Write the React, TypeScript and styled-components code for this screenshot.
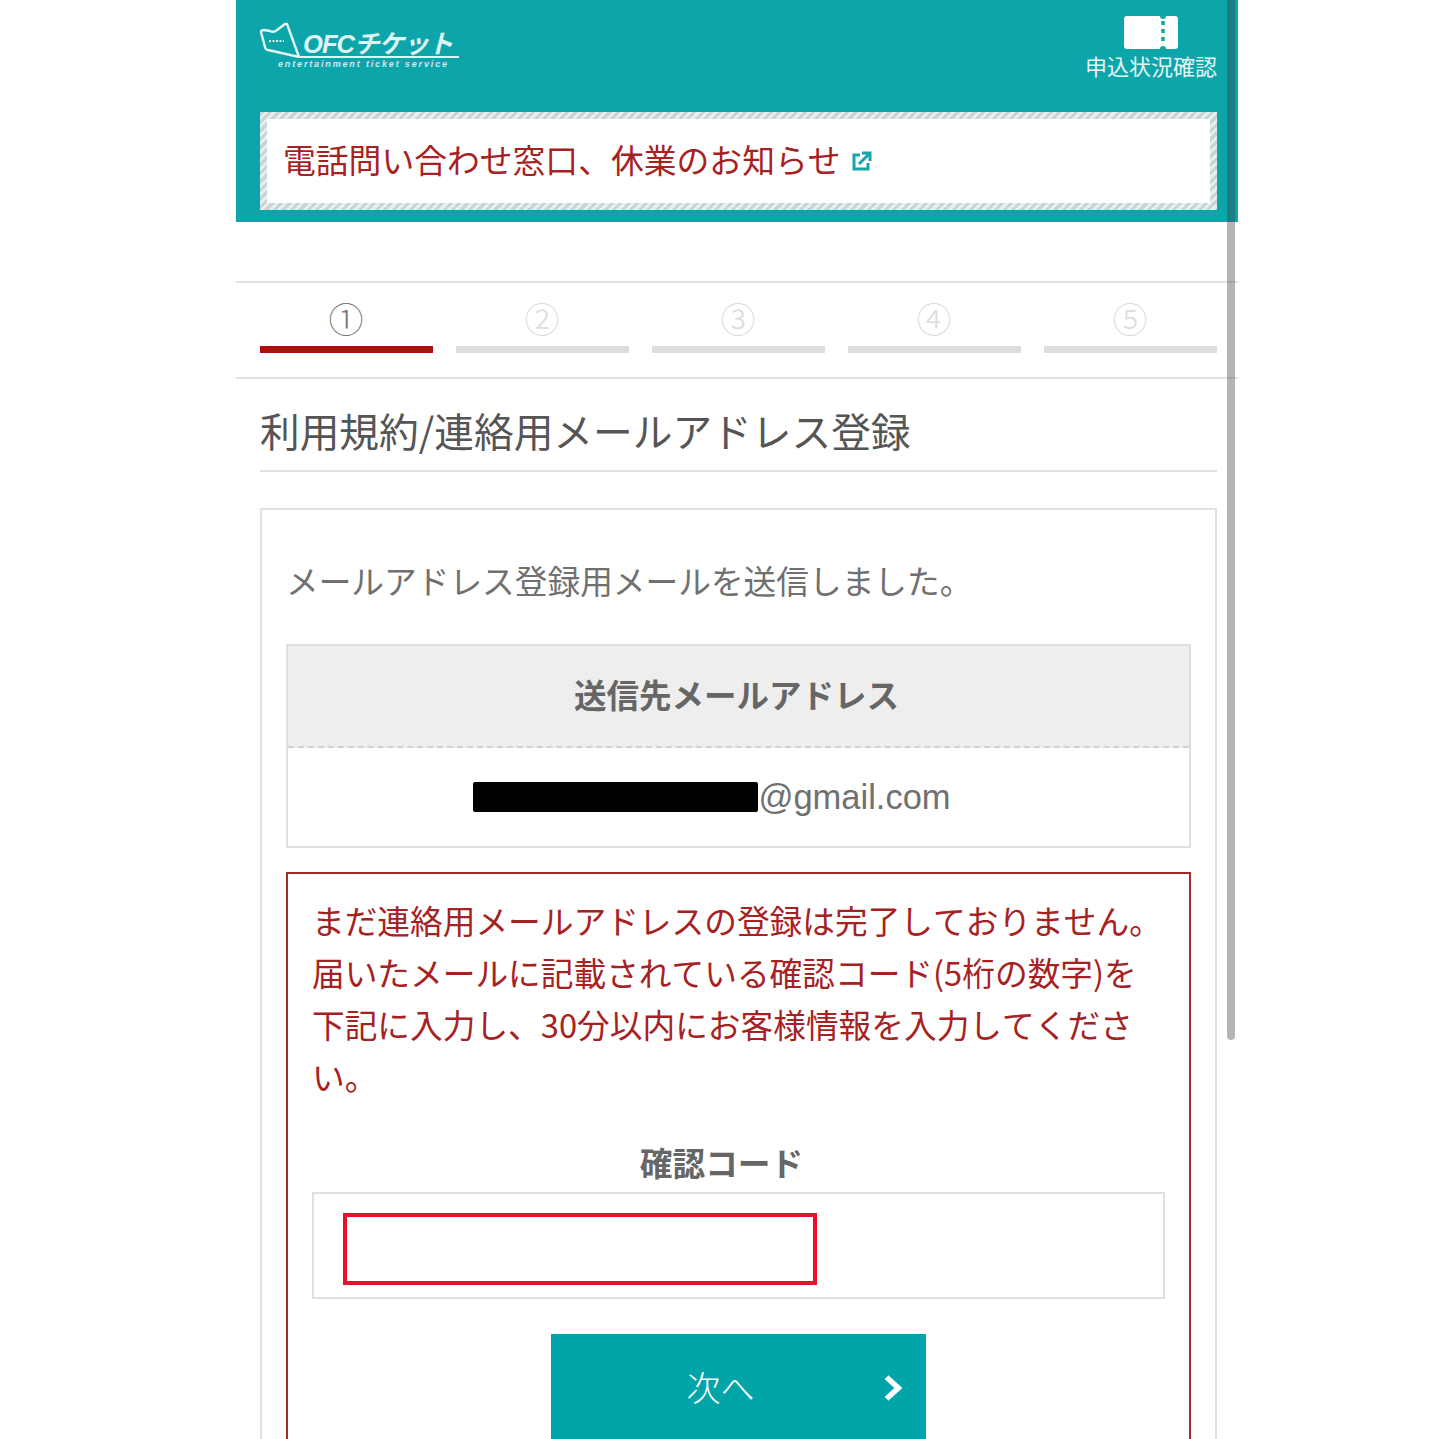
import React from 'react';
import styled, {createGlobalStyle} from 'styled-components';

const STEPS = ['①', '②', '③', '④', '⑤'];

export default function App() {
  return (
    <>
      <GlobalStyle />
      <Page>
        <Header>
          <TopRow>
            <Logo>
              <LogoMark viewBox="0 0 44 36" fill="none">
                <path
                  d="M2 10 Q2 8 5 8 L11 9 Q15 11 18 8 L26 2 L28 2 L40 35 L9 28 Q7 28 6 25 Z"
                  stroke="#e4f6f6"
                  strokeWidth="2.4"
                  strokeLinejoin="round"
                />
                <path d="M10 19 H25" stroke="#e4f6f6" strokeWidth="2" strokeDasharray="2 1.5" />
              </LogoMark>
              <LogoWords>
                <LogoName>OFCチケット</LogoName>
                <LogoTagline>entertainment ticket service</LogoTagline>
              </LogoWords>
            </Logo>
            <StatusLink>
              <svg width="54" height="33" viewBox="0 0 54 33">
                <path
                  d="M3 0 H36 A3 3 0 0 0 42 0 H51 A3 3 0 0 1 54 3 V30 A3 3 0 0 1 51 33 H42 A3 3 0 0 0 36 33 H3 A3 3 0 0 1 0 30 V3 A3 3 0 0 1 3 0 Z"
                  fill="#fff"
                />
                <path d="M39 5 V29" stroke="#0ca5aa" strokeWidth="3.5" strokeDasharray="4 4" />
              </svg>
              <StatusLabel>申込状況確認</StatusLabel>
            </StatusLink>
          </TopRow>
          <Notice>
            <NoticeText>電話問い合わせ窓口、休業のお知らせ</NoticeText>
            <svg width="20" height="20" viewBox="0 0 20 20" fill="none" stroke="#17a5aa" strokeWidth="3">
              <path d="M8 4 H2 V18 H16 V12" />
              <path d="M7 13 L17 3 M10 2 H18 V10" />
            </svg>
          </Notice>
        </Header>

        <Steps>
          {STEPS.map((step, index) => (
            <Step key={step}>
              <StepNumber $active={index === 0}>{step}</StepNumber>
              <StepBar $active={index === 0} />
            </Step>
          ))}
        </Steps>

        <Title>利用規約/連絡用メールアドレス登録</Title>

        <Card>
          <Lead>メールアドレス登録用メールを送信しました。</Lead>
          <AddressTable>
            <AddressHead>送信先メールアドレス</AddressHead>
            <AddressBody>
              <Redaction />
              @gmail.com
            </AddressBody>
          </AddressTable>
          <Warning>
            <WarningText>
              まだ連絡用メールアドレスの登録は完了しておりません。届いたメールに記載されている確認コード(5桁の数字)を下記に入力し、30分以内にお客様情報を入力してください。
            </WarningText>
            <CodeLabel>確認コード</CodeLabel>
            <CodeField>
              <CodeInput type="text" />
            </CodeField>
            <NextButton>
              次へ
              <NextArrow viewBox="0 0 20 26" fill="none">
                <path d="M4 3 L15 13 L4 23" stroke="#fff" strokeWidth="5" />
              </NextArrow>
            </NextButton>
          </Warning>
        </Card>
        <ScrollThumb />
      </Page>
    </>
  );
}

const GlobalStyle = createGlobalStyle`
  html, body {
    margin: 0;
    height: 1439px;
    overflow: hidden;
    background: #fff;
  }
  body {
    font-family: "Noto Sans CJK JP", "Noto Sans", sans-serif;
    font-kerning: none;
  }
`;

const Page = styled.div`
  position: relative;
  width: 1002px;
  height: 1439px;
  margin-left: 236px;
  overflow: hidden;
`;

const Header = styled.header`
  background: #0ca5aa;
  height: 222px;
  padding: 0 21px 0 24px;
  box-sizing: border-box;
`;

const TopRow = styled.div`
  display: flex;
  justify-content: space-between;
  height: 112px;
`;

const Logo = styled.div`
  display: flex;
  align-items: flex-start;
  padding-top: 22px;
  margin-left: -1px;
`;

const LogoMark = styled.svg`
  width: 44px;
  height: 36px;
`;

const LogoWords = styled.div`
  display: flex;
  flex-direction: column;
  margin-left: -3px;
`;

const LogoName = styled.div`
  font-family: "Liberation Sans", "Noto Sans CJK JP", sans-serif;
  font-style: italic;
  font-weight: 700;
  font-size: 25.6px;
  line-height: 32px;
  padding: 6px 0 0 3px;
  letter-spacing: -1px;
  color: #dff4f4;
  border-bottom: 2px solid #dff4f4;
  width: 159px;
  white-space: nowrap;
  box-sizing: border-box;
  height: 36px;
`;

const LogoTagline = styled.div`
  margin: 1px 0 0 -22px;
  font-family: "Liberation Sans", sans-serif;
  font-style: italic;
  font-weight: 700;
  font-size: 9px;
  line-height: 10px;
  letter-spacing: 1.85px;
  color: #cdeced;
  white-space: nowrap;
`;

const StatusLink = styled.div`
  display: flex;
  flex-direction: column;
  align-items: center;
  padding-top: 16px;
`;

const StatusLabel = styled.div`
  margin-top: 3px;
  font-size: 22px;
  line-height: 27px;
  color: #e6f6f6;
  white-space: nowrap;
`;

const Notice = styled.div`
  display: flex;
  align-items: center;
  gap: 11px;
  height: 98px;
  box-sizing: border-box;
  padding: 0 16px;
  background: linear-gradient(#fff, #fff) padding-box,
    repeating-linear-gradient(135deg, #c6d6d6 0 3px, #e6efee 3px 6px) border-box;
  border: 7px solid transparent;
`;

const NoticeText = styled.span`
  padding-bottom: 4px;
  font-size: 32.8px;
  font-weight: 400;
  line-height: 1;
  color: #a62222;
  white-space: nowrap;
`;

const Steps = styled.div`
  display: grid;
  grid-template-columns: repeat(5, 1fr);
  gap: 23px;
  height: 98px;
  margin-top: 59px;
  padding: 0 21px 0 24px;
  box-sizing: border-box;
  border-top: 2px solid #e2e2e2;
  border-bottom: 2px solid #e2e2e2;
`;

const Step = styled.div`
  display: flex;
  flex-direction: column;
  align-items: stretch;
  padding-top: 17px;
`;

const StepNumber = styled.div<{$active: boolean}>`
  height: 46px;
  padding-right: 1px;
  font-size: 35px;
  font-weight: 300;
  line-height: 36px;
  text-align: center;
  color: ${props => (props.$active ? '#777' : '#dcdcdc')};
`;

const StepBar = styled.div<{$active: boolean}>`
  height: 7px;
  background: ${props => (props.$active ? '#ad0f0f' : '#dddddd')};
`;

const Title = styled.h1`
  margin: 0 21px 0 24px;
  height: 93px;
  box-sizing: border-box;
  padding-top: 21px;
  border-bottom: 2px solid #e2e2e2;
  font-size: 39.7px;
  font-weight: 400;
  line-height: 60px;
  color: #555;
  white-space: nowrap;
`;

const Card = styled.section`
  margin: 36px 21px 0 24px;
  padding: 0 24px 40px;
  border: 2px solid #e2e2e2;
`;

const Lead = styled.p`
  margin: 0;
  padding-top: 44px;
  height: 134px;
  box-sizing: border-box;
  font-size: 32.7px;
  font-weight: 400;
  line-height: 52px;
  color: #707070;
  white-space: nowrap;
`;

const AddressTable = styled.div`
  border: 2px solid #dfdfdf;
`;

const AddressHead = styled.div`
  height: 100px;
  padding-right: 4px;
  border-bottom: 2px dashed #d2d2d2;
  background: #eeeeee;
  font-size: 32.5px;
  font-weight: 700;
  line-height: 96px;
  text-align: center;
  color: #666;
`;

const AddressBody = styled.div`
  display: flex;
  align-items: center;
  justify-content: center;
  height: 98px;
  padding-right: 53px;
  font-family: "Liberation Sans", sans-serif;
  font-size: 34.5px;
  color: #707070;
`;

const Redaction = styled.span`
  width: 285px;
  height: 30px;
  border-radius: 2px;
  background: #000;
`;

const Warning = styled.div`
  margin-top: 24px;
  padding: 20px 24px 60px;
  border: 2px solid #a52a2a;
`;

const WarningText = styled.p`
  margin: 0;
  font-size: 32.7px;
  font-weight: 400;
  line-height: 52px;
  color: #a62222;
`;

const CodeLabel = styled.div`
  margin-top: 30px;
  padding-right: 34px;
  font-size: 32.7px;
  font-weight: 700;
  line-height: 60px;
  text-align: center;
  color: #666;
`;

const CodeField = styled.div`
  display: flex;
  align-items: flex-start;
  height: 107px;
  box-sizing: border-box;
  padding: 19px 29px;
  border: 2px solid #dfdfdf;
`;

const CodeInput = styled.input`
  width: 474px;
  height: 72px;
  box-sizing: border-box;
  border: 4px solid #e8102a;
  background: #fff;
  outline: none;
`;

const NextButton = styled.button`
  position: relative;
  display: block;
  width: 375px;
  height: 108px;
  margin: 35px auto 0;
  padding: 0 36px 4px 0;
  border: 0;
  background: #00a5a9;
  font-family: inherit;
  font-size: 34px;
  font-weight: 300;
  color: #fff;
`;

const NextArrow = styled.svg`
  position: absolute;
  top: 40px;
  right: 20px;
  width: 26px;
  height: 28px;
`;

const ScrollThumb = styled.div`
  position: absolute;
  top: 0;
  right: 3px;
  width: 8px;
  height: 1040px;
  border-radius: 0 0 4px 4px;
  background: rgba(60, 60, 60, 0.38);
`;
